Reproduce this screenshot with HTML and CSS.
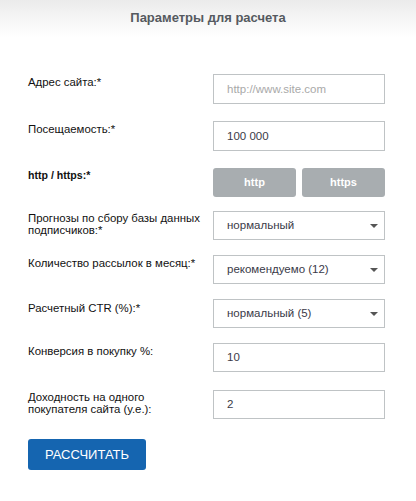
FILE: index.html
```html
<!DOCTYPE html>
<html lang="ru">
<head>
<meta charset="utf-8">
<link rel="stylesheet" href="styles.css">
</head>
<body>
<div class="calc">
  <div class="calc-head">Параметры для расчета</div>
  <form class="calc-form">
    <div class="row r1">
      <label class="lbl">Адрес сайта:*</label>
      <div class="ctl"><div class="field placeholder">http://www.site.com</div></div>
    </div>
    <div class="row r2">
      <label class="lbl">Посещаемость:*</label>
      <div class="ctl"><div class="field">100 000</div></div>
    </div>
    <div class="row r3">
      <label class="lbl bold">http / https:*</label>
      <div class="ctl toggles">
        <span class="tbtn">http</span>
        <span class="tbtn">https</span>
      </div>
    </div>
    <div class="row r4">
      <label class="lbl">Прогнозы по сбору базы данных подписчиков:*</label>
      <div class="ctl"><div class="field select">нормальный<span class="arrow"></span></div></div>
    </div>
    <div class="row r5">
      <label class="lbl">Количество рассылок в месяц:*</label>
      <div class="ctl"><div class="field select">рекомендуемо (12)<span class="arrow"></span></div></div>
    </div>
    <div class="row r6">
      <label class="lbl">Расчетный CTR (%):*</label>
      <div class="ctl"><div class="field select">нормальный (5)<span class="arrow"></span></div></div>
    </div>
    <div class="row r7">
      <label class="lbl">Конверсия в покупку %:</label>
      <div class="ctl"><div class="field">10</div></div>
    </div>
    <div class="row r8">
      <label class="lbl">Доходность на одного покупателя сайта (у.е.):</label>
      <div class="ctl"><div class="field">2</div></div>
    </div>
    <div class="submit-row">
      <span class="submit">РАССЧИТАТЬ</span>
    </div>
  </form>
</div>
</body>
</html>
```

FILE: styles.css
```css
* { box-sizing: border-box; }
html, body { margin: 0; padding: 0; background: #fff; }
body { font-family: "Liberation Sans", Arial, sans-serif; color: #111; }

.calc { width: 416px; height: 501px; }

.calc-head {
  height: 38px;
  padding-top: 10px;
  text-align: center;
  font-size: 13px;
  font-weight: bold;
  color: #555a60;
  background: linear-gradient(to bottom, #ebebeb 0%, #f6f6f6 50%, #ffffff 100%);
}

.calc-form { padding: 36px 0 0 28px; }

.row { display: flex; align-items: flex-start; }
.r1, .r2 { margin-bottom: 17px; }
.r3 { margin-bottom: 14px; }
.r4, .r5, .r6 { margin-bottom: 15px; }
.r7 { margin-bottom: 18px; }
.r8 { margin-bottom: 20px; }

.lbl {
  width: 185px;
  padding-top: 1px;
  padding-right: 10px;
  font-size: 11.4px;
  line-height: 12px;
  color: #111;
}
.r1 .lbl, .r2 .lbl, .r5 .lbl, .r7 .lbl { padding-top: 2px; }
.r6 .lbl { padding-top: 3px; }
.lbl.bold { font-weight: bold; font-size: 10.6px; padding-top: 1px; }

.ctl { width: 172px; }

.field {
  position: relative;
  height: 30px;
  border: 1px solid #bfc3c5;
  padding-left: 13px;
  font-size: 11.5px;
  line-height: 28px;
  color: #3a3a48;
  background: #fff;
}
.r4 .field, .r5 .field, .r6 .field, .r7 .field, .r8 .field { height: 29px; line-height: 27px; }
.field.placeholder { color: #a9a9a9; }

.arrow {
  position: absolute;
  right: 6px;
  top: 12px;
  width: 0;
  height: 0;
  border-left: 4px solid transparent;
  border-right: 4px solid transparent;
  border-top: 4px solid #555;
}

.toggles { display: flex; gap: 6px; }
.tbtn {
  flex: 1;
  height: 29px;
  border-radius: 3px;
  background: #a8adb0;
  color: #fff;
  font-size: 11px;
  font-weight: bold;
  line-height: 29px;
  text-align: center;
}

.submit-row { display: flex; }
.submit {
  display: inline-block;
  width: 118px;
  height: 31px;
  border-radius: 3px;
  background: #1565b0;
  color: #fff;
  font-size: 13px;
  line-height: 31px;
  text-align: center;
}
```
